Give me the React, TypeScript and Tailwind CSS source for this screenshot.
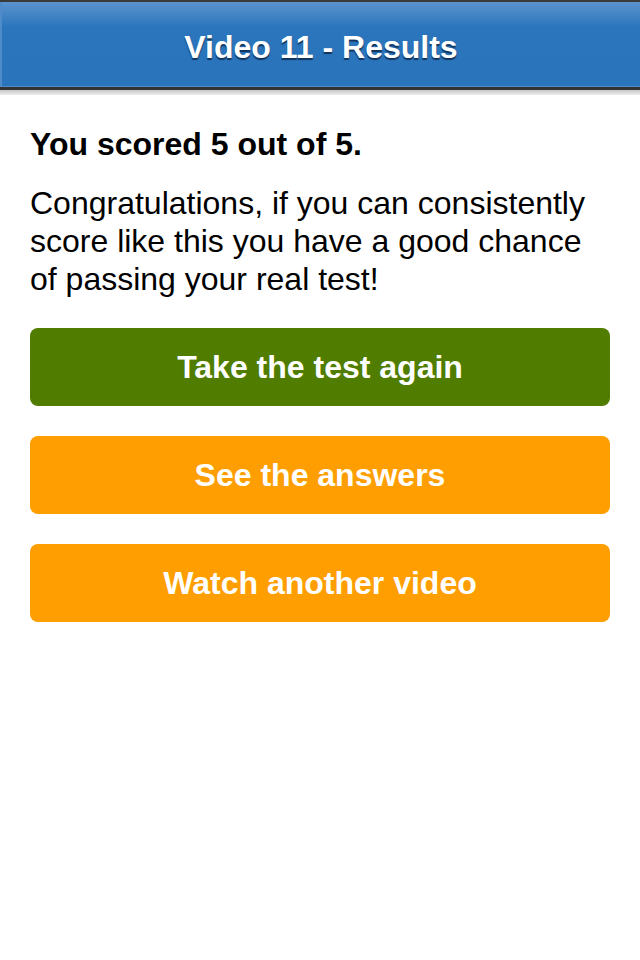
export default function App() {
  return (
    <div className="min-h-[960px] w-[640px] bg-white font-['Liberation_Sans',Arial,sans-serif]">
      {/* Header bar */}
      <div className="border-t-2 border-[#3a3a3a]">
        <div className="flex h-[85px] items-center justify-center border-l-2 border-[#4f8bc9] bg-[linear-gradient(#5b93cd,#2b75bc_30%,#2a74bb)] pt-[4px] shadow-[inset_0_-1px_0_#4f8bc9]">
          <h1 className="text-[32px] font-bold leading-[38px] text-white [text-shadow:0_2px_1px_rgba(10,30,60,0.75)]">
            Video 11 - Results
          </h1>
        </div>
        <div className="h-[3px] bg-[#333]" />
        <div className="h-[5px] bg-[linear-gradient(#c8c8c8,#ededed)]" />
      </div>

      {/* Content */}
      <div className="px-[30px] pt-[31px]">
        <p className="text-[32px] font-bold leading-[36px] text-black">You scored 5 out of 5.</p>
        <p className="mt-[22px] text-[32px] leading-[38px] text-black">
          Congratulations, if you can consistently score like this you have a good chance of passing your real test!
        </p>

        <div className="mt-[30px] flex flex-col gap-[30px]">
          <button className="h-[78px] rounded-[8px] bg-[#507d00] text-[32px] font-bold text-white">
            Take the test again
          </button>
          <button className="h-[78px] rounded-[8px] bg-[#ff9e00] text-[32px] font-bold text-white">
            See the answers
          </button>
          <button className="h-[78px] rounded-[8px] bg-[#ff9e00] text-[32px] font-bold text-white">
            Watch another video
          </button>
        </div>
      </div>
    </div>
  );
}
